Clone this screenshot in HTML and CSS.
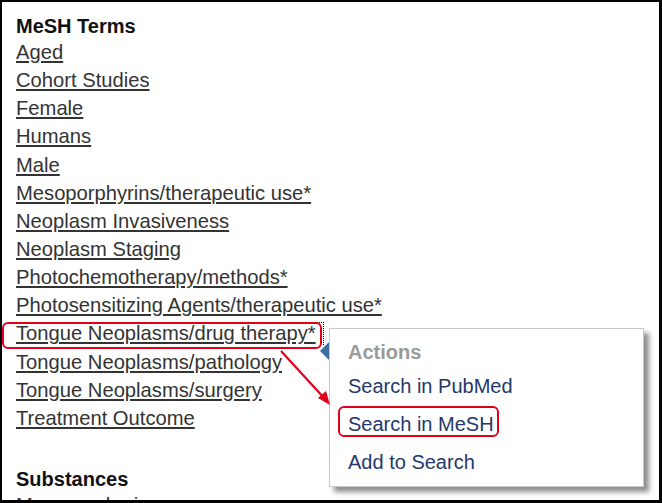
FILE: index.html
```html
<!DOCTYPE html>
<html>
<head>
<meta charset="utf-8">
<link rel="stylesheet" href="styles.css">
</head>
<body>
<div class="frame">
  <h3 class="heading">MeSH Terms</h3>
  <ul class="terms">
    <li><a class="term" href="#">Aged</a></li>
    <li><a class="term" href="#">Cohort Studies</a></li>
    <li><a class="term" href="#">Female</a></li>
    <li><a class="term" href="#">Humans</a></li>
    <li><a class="term" href="#">Male</a></li>
    <li><a class="term" href="#">Mesoporphyrins/therapeutic use*</a></li>
    <li><a class="term" href="#">Neoplasm Invasiveness</a></li>
    <li><a class="term" href="#">Neoplasm Staging</a></li>
    <li><a class="term" href="#">Photochemotherapy/methods*</a></li>
    <li><a class="term" href="#">Photosensitizing Agents/therapeutic use*</a></li>
    <li><a class="term term-active" href="#">Tongue Neoplasms/drug therapy*</a></li>
    <li><a class="term" href="#">Tongue Neoplasms/pathology</a></li>
    <li><a class="term" href="#">Tongue Neoplasms/surgery</a></li>
    <li><a class="term" href="#">Treatment Outcome</a></li>
  </ul>
  <h3 class="heading heading-sub">Substances</h3>
  <ul class="terms">
    <li><a class="term" href="#">Mesoporphyrins</a></li>
  </ul>

  <div class="popup">
    <div class="popup-title">Actions</div>
    <a class="popup-item" href="#">Search in PubMed</a>
    <a class="popup-item" href="#"><span class="hl">Search in MeSH</span></a>
    <a class="popup-item" href="#">Add to Search</a>
  </div>

  <svg class="arrow" width="662" height="503" viewBox="0 0 662 503">
    <line x1="281" y1="351" x2="325" y2="399" stroke="#e0001a" stroke-width="2.2"/>
    <polygon points="330,405 318,398 326,391" fill="#e0001a"/>
  </svg>
</div>
</body>
</html>
```

FILE: styles.css
```css
html, body {
  margin: 0;
  padding: 0;
  background: #fff;
}

.frame {
  position: relative;
  width: 662px;
  height: 503px;
  box-sizing: border-box;
  border: 2px solid #000;
  border-right-width: 3px;
  border-bottom-width: 3px;
  overflow: hidden;
  padding: 12px 0 0 14px;
  font-family: "Liberation Sans", Arial, sans-serif;
  background: #fff;
}

.heading {
  margin: 0;
  font-size: 20px;
  font-weight: bold;
  line-height: 24px;
  color: #111;
}

.heading-sub {
  margin-top: 35px;
}

.terms {
  list-style: none;
  margin: 0;
  padding: 0;
}

.terms li {
  font-size: 20.2px;
  line-height: 28.15px;
  height: 28.15px;
}

.term {
  color: #333;
  text-decoration: underline;
  text-decoration-color: #333;
}

.term-active {
  position: relative;
}

.term-active::before {
  content: "";
  position: absolute;
  left: -14px;
  right: -6px;
  top: 0px;
  bottom: -5px;
  border: 2.6px solid #e0001a;
  border-radius: 6px;
}

.term-active::after {
  content: "";
  position: absolute;
  right: -8px;
  width: 8px;
  top: 0px;
  bottom: -1px;
  border-top: 1px dotted #000;
  border-right: 1px dotted #000;
}

.popup {
  position: absolute;
  left: 327px;
  top: 326px;
  width: 315px;
  height: 159px;
  box-sizing: border-box;
  border: 1px solid #c9c9c9;
  background: #fff;
  box-shadow: 5px 5px 5px rgba(0, 0, 0, 0.45);
  padding: 7px 0 0 18px;
}

.popup::before {
  content: "";
  position: absolute;
  left: -10px;
  top: 13px;
  width: 0;
  height: 0;
  border-top: 9px solid transparent;
  border-bottom: 9px solid transparent;
  border-right: 9px solid #3d6ea6;
}

.popup-title {
  font-size: 20px;
  font-weight: bold;
  line-height: 32px;
  color: #9a9a9a;
}

.popup-item {
  display: block;
  font-size: 20px;
  line-height: 37.85px;
  color: #24386a;
  text-decoration: none;
}

.hl {
  position: relative;
}

.hl::after {
  content: "";
  position: absolute;
  left: -10px;
  right: -5px;
  top: -7px;
  bottom: -2px;
  border: 2.6px solid #e0001a;
  border-radius: 6px;
}

.arrow {
  position: absolute;
  left: -2px;
  top: -2px;
  pointer-events: none;
}
```
